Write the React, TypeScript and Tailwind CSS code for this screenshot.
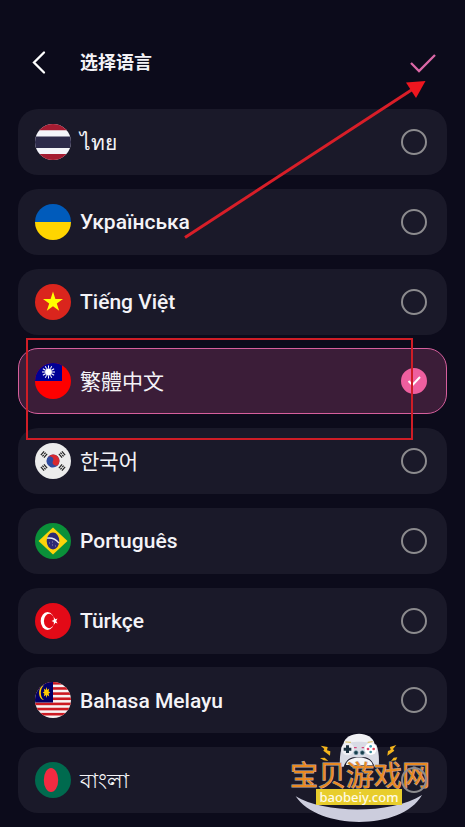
import { useState, type ReactNode } from 'react';

interface Language {
  code: string;
  name: string;
  flag: ReactNode;
  light?: boolean;
}

const MALAYSIA_STRIPES = [0, 1, 2, 3, 4, 5, 6];
const SUN_RAYS = [0, 30, 60, 90, 120, 150];
const TRIGRAMS = [
  { x: 9, y: 11.5, angle: -50 },
  { x: 27, y: 11.5, angle: 50 },
  { x: 9, y: 24.5, angle: 50 },
  { x: 27, y: 24.5, angle: -50 },
];

const LANGUAGES: Language[] = [
  {
    code: 'th',
    name: 'ไทย',
    flag: (
      <>
        <path fill="#f4f4fa" d="M0 0h36v36H0z" />
        <path fill="#a51c32" d="M0 0h36v6.3H0zM0 30h36v6H0z" />
        <path fill="#2d2a4a" d="M0 12.5h36v11.5H0z" />
      </>
    ),
  },
  {
    code: 'uk',
    name: 'Українська',
    flag: (
      <>
        <path fill="#005bbb" d="M0 0h36v18H0z" />
        <path fill="#ffd500" d="M0 18h36v18H0z" />
      </>
    ),
  },
  {
    code: 'vi',
    name: 'Tiếng Việt',
    flag: (
      <>
        <path fill="#da251d" d="M0 0h36v36H0z" />
        <path fill="#ff0" d="M18 7.5l2.4 7.4h7.6l-6.2 4.5 2.4 7.4-6.2-4.6-6.2 4.6 2.4-7.4L8 14.9h7.600z" />
      </>
    ),
  },
  {
    code: 'zh-TW',
    name: '繁體中文',
    light: true,
    flag: (
      <>
        <path fill="#fe0000" d="M0 0h36v36H0z" />
        <path fill="#000095" d="M0 0h27v18H0z" />
        <g stroke="#fff" strokeWidth="1">
          {SUN_RAYS.map((angle) => (
            <path key={angle} d="M13.5 2.5v13" transform={`rotate(${angle} 13.5 9)`} />
          ))}
        </g>
        <circle cx="13.5" cy="9" r="3.8" fill="#fff" stroke="#000095" strokeWidth=".4" />
      </>
    ),
  },
  {
    code: 'ko',
    name: '한국어',
    light: true,
    flag: (
      <>
        <path fill="#ececec" d="M0 0h36v36H0z" />
        <g transform="rotate(25 18 18)">
          <circle cx="18" cy="18" r="6.5" fill="#2f4ba0" />
          <path fill="#d8292f" d="M11.5 18a6.5 6.5 0 0113 0 3.250 3.250 0 01-6.500 0 3.250 3.250 0 00-6.500 0z" />
        </g>
        {TRIGRAMS.map(({ x, y, angle }) => (
          <path
            key={`${x}-${y}`}
            stroke="#222"
            strokeWidth="1.2"
            d={`M${x - 2.5} ${y - 2}h5M${x - 2.5} ${y}h2.1m.8 0h2.1M${x - 2.5} ${y + 2}h5`}
            transform={`rotate(${angle} ${x} ${y})`}
          />
        ))}
      </>
    ),
  },
  {
    code: 'pt',
    name: 'Português',
    flag: (
      <>
        <path fill="#0a9039" d="M0 0h36v36H0z" />
        <path fill="#fdd40a" d="M18 4.5L32.500 18 18 31.500 3.500 18z" />
        <ellipse cx="18" cy="18" rx="6.3" ry="8.5" fill="#2d2a75" />
        <path fill="none" stroke="#e8eaf0" strokeWidth="1.3" d="M12 15.2c5-.8 9 1.200 12 5" />
        <path stroke="#aab" strokeWidth=".8" d="M14 20h1m2 2h1m2 1h1m-4-4h1" />
      </>
    ),
  },
  {
    code: 'tr',
    name: 'Türkçe',
    flag: (
      <>
        <path fill="#e30a17" d="M0 0h36v36H0z" />
        <ellipse cx="12.500" cy="18" rx="6.8" ry="9" fill="#fff" />
        <ellipse cx="14.2" cy="18" rx="5.3" ry="7.2" fill="#e30a17" />
        <path fill="#fff" d="M16.5 18l2.300-1 .1-2.700 1.500 2 2.100-.8-1.300 2.500 1.300 2.500-2.100-.8-1.500 2-.1-2.700z" />
      </>
    ),
  },
  {
    code: 'ms',
    name: 'Bahasa Melayu',
    flag: (
      <>
        <path fill="#f7f3f3" d="M0 0h36v36H0z" />
        {MALAYSIA_STRIPES.map((n) => (
          <rect key={n} y={n * 5.15} width="36" height="2.6" fill="#cc1a22" />
        ))}
        <path fill="#010066" d="M0 0h18v20.6H0z" />
        <path fill="#fc0" d="M9 3.500C2.500 4 2.500 17.500 9 18 4.800 15.500 4.800 6 9 3.500z" />
        <path fill="#fc0" d="M11.5 5l.8 3 1.900-1.600-.6 3 1.700 1.100-1.700 1.100.6 3-1.900-1.600-.8 3-.8-3-1.900 1.600.6-3-1.700-1.100 1.700-1.100-.6-3 1.900 1.600z" />
      </>
    ),
  },
  {
    code: 'bn',
    name: 'বাংলা',
    flag: (
      <>
        <path fill="#006a4e" d="M0 0h36v36H0z" />
        <ellipse cx="16" cy="18" rx="7.2" ry="12" fill="#f42a41" />
      </>
    ),
  },
];

interface LanguageRowProps {
  language: Language;
  selected: boolean;
  onSelect: () => void;
}

const LanguageRow = ({ language, selected, onSelect }: LanguageRowProps) => (
  <li>
    <label
      className={`flex h-[66px] cursor-pointer items-center rounded-[20px] border pr-[19px] pl-4 ${
        selected ? 'border-[#d65f9d] bg-[#3b1d38]' : 'border-transparent bg-[#1a1929]'
      }`}
    >
      <svg viewBox="0 0 36 36" className="size-9 shrink-0 overflow-hidden rounded-full" aria-hidden="true">
        {language.flag}
      </svg>
      <span
        lang={language.code}
        className={`ml-[9px] flex-1 pt-px text-[21px] leading-7 text-[#f4f3f7] ${
          language.light ? 'font-normal' : 'font-medium'
        }`}
      >
        {language.name}
      </span>
      <span className="relative z-20 grid size-[26px] shrink-0 place-items-center">
        <input
          type="radio"
          name="language"
          value={language.code}
          checked={selected}
          onChange={onSelect}
          className="col-start-1 row-start-1 size-[26px] appearance-none rounded-full border-2 border-[#8c8b8e] checked:border-[#ee5f9f] checked:bg-[#ee5f9f]"
        />
        {selected && (
          <svg
            viewBox="0 0 26 26"
            className="pointer-events-none col-start-1 row-start-1 size-[26px]"
            fill="none"
            stroke="#fff"
            strokeWidth="2"
            aria-hidden="true"
          >
            <path d="M7.5 13l4 4 7.500-8" />
          </svg>
        )}
      </span>
    </label>
  </li>
);

const SiteLogo = () => (
  <svg
    viewBox="0 0 190 107"
    className="pointer-events-none absolute right-0 bottom-0 z-10 h-[107px] w-[190px]"
    role="img"
    aria-label="宝贝游戏网"
  >
    <g transform="scale(.33333)">
      {/* crescent */}
      <path fill="#cccddd" d="M62 229c85 52 285 55 379-4-60 107-310 107-379 4z" />
      {/* sparks */}
      <path fill="#f4b51c" d="M137 77l21 4-2 10 10 3-1 13-20-15 3-5zM364 75l-19 6 2 9-8 3-2 14 21-15-4-5zM135 114l14-1 11 10-14-2zM367 112l-11 1-8 10 15-2z" />
      {/* gamepad */}
      <path fill="#f1f1f5" d="M205 72c8-40 85-42 94 0l-47 20z" />
      <path fill="#d9dbe5" d="M202 74c20-12 80-12 102 0 8 18 9 45 7 66h-12c-5-15-17-27-28-28h-36c-12 1-25 14-29 28h-11c-2-23 1-50 9-66z" />
      <path fill="#f5f5f8" d="M213 135c2-30 76-30 80 0z" />
      <path fill="none" stroke="#d9bb51" strokeWidth="3" d="M211 66l17 1M278 67l15-2" />
      <circle cx="218" cy="87" r="19" fill="#eeeef3" />
      <circle cx="287" cy="87" r="18" fill="#fff" />
      <path fill="#182d3c" d="M213 76h9v7h7v9h-7v7h-9v-7h-7v-9h7z" />
      <circle cx="287" cy="79" r="4" fill="#3fa4bd" />
      <circle cx="287" cy="96" r="4" fill="#3e8c9b" />
      <circle cx="279" cy="87" r="4" fill="#dc416b" />
      <circle cx="296" cy="87" r="4" fill="#e74761" />
      <circle cx="243" cy="98" r="6" fill="#183d4b" stroke="#648c9d" strokeWidth="2" />
      <circle cx="262" cy="98" r="6" fill="#183d4b" stroke="#648c9d" strokeWidth="2" />
      <path fill="#d4467d" d="M237 81h8v4h-8zM260 81h7v4h-7z" />
    </g>
    <text
      x="15"
      y="66"
      className="font-['Noto_Sans_CJK_SC',sans-serif] text-[28px] font-normal"
      fill="#ea8a22"
      stroke="#b9a9a4"
      strokeWidth="1"
      paintOrder="stroke"
    >
      宝贝游戏网
    </text>
    <rect x="41" y="69" width="86" height="16" fill="#e8cd2c" />
    <text
      x="84"
      y="82"
      textAnchor="middle"
      className="font-['Noto_Sans',sans-serif] text-[13px] font-medium"
      fill="#fffbe6"
    >
      baobeiy.com
    </text>
  </svg>
);

const Annotations = () => (
  <svg
    viewBox="0 0 465 827"
    className="pointer-events-none absolute top-0 left-0 z-30 w-full"
    fill="none"
    aria-hidden="true"
  >
    <path stroke="#d81e28" strokeWidth="3" d="M185 237.5L413 89" />
    <path fill="#ee161f" d="M425.5 81L406 82.500 416 98z" />
    <rect x="27" y="339" width="385" height="100" stroke="#cf1d26" strokeWidth="2" />
  </svg>
);

export default function App() {
  const [selected, setSelected] = useState('zh-TW');

  return (
    <div className="relative flex min-h-screen flex-col overflow-hidden bg-[#0c0b1b] font-[Roboto,'Noto_Sans_CJK_SC','Noto_Sans_CJK_KR','Noto_Sans',sans-serif]">
      <header className="flex items-center px-7 pt-[47px] pb-[30px]">
        <button type="button" aria-label="返回" className="grid h-8 w-6 place-items-center text-white">
          <svg viewBox="0 0 24 32" className="h-8 w-6" fill="none" stroke="currentColor" strokeWidth="2.3" strokeLinecap="round">
            <path d="M16 5.500L6 15.500l10 10" />
          </svg>
        </button>
        <h1 className="ml-7 flex-1 text-[18px] leading-8 font-bold text-[#f4f3f7]">选择语言</h1>
        <button type="button" aria-label="确定" className="grid h-8 w-7 place-items-center">
          <svg viewBox="0 0 28 32" className="h-8 w-7" fill="none" stroke="#db68a7" strokeWidth="2.3">
            <path d="M2 16l8 8L26 8" />
          </svg>
        </button>
      </header>

      <ul className="flex flex-1 flex-col justify-between px-[18px] pb-[14px]">
        {LANGUAGES.map((language) => (
          <LanguageRow
            key={language.code}
            language={language}
            selected={selected === language.code}
            onSelect={() => setSelected(language.code)}
          />
        ))}
      </ul>

      <SiteLogo />
      <Annotations />
    </div>
  );
}
